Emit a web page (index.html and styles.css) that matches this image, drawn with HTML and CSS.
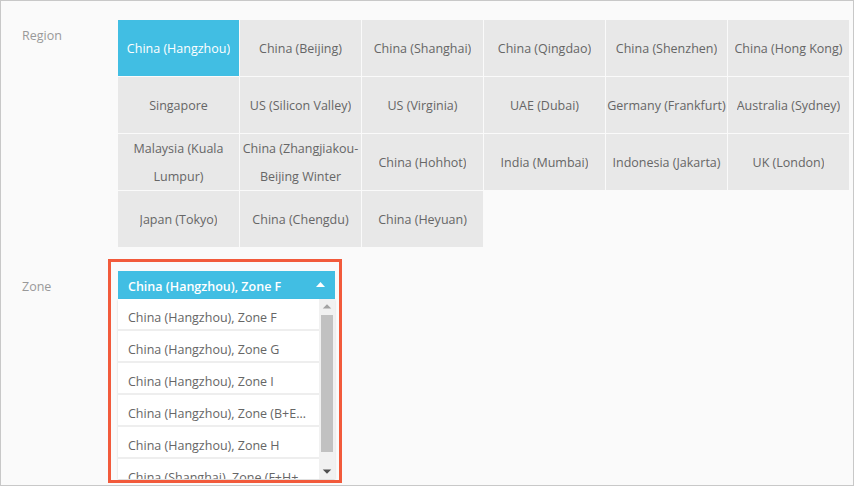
FILE: index.html
```html
<!DOCTYPE html>
<html lang="en">
<head>
    <meta charset="UTF-8">
    <meta name="viewport" content="width=device-width, initial-scale=1.0">
    <title>Region and Zone</title>
    <link rel="stylesheet" href="styles.css">
</head>
<body>
    <div class="frame">
        <div class="form-row">
            <div class="form-label">Region</div>
            <div class="region-grid">
                <div class="region-cell active"><span>China (Hangzhou)</span></div>
                <div class="region-cell"><span>China (Beijing)</span></div>
                <div class="region-cell"><span>China (Shanghai)</span></div>
                <div class="region-cell"><span>China (Qingdao)</span></div>
                <div class="region-cell"><span>China (Shenzhen)</span></div>
                <div class="region-cell"><span>China (Hong Kong)</span></div>
                <div class="region-cell"><span>Singapore</span></div>
                <div class="region-cell"><span>US (Silicon Valley)</span></div>
                <div class="region-cell"><span>US (Virginia)</span></div>
                <div class="region-cell"><span>UAE (Dubai)</span></div>
                <div class="region-cell"><span>Germany (Frankfurt)</span></div>
                <div class="region-cell"><span>Australia (Sydney)</span></div>
                <div class="region-cell"><span>Malaysia (Kuala Lumpur)</span></div>
                <div class="region-cell"><span>China (Zhangjiakou-Beijing Winter Games)</span></div>
                <div class="region-cell"><span>China (Hohhot)</span></div>
                <div class="region-cell"><span>India (Mumbai)</span></div>
                <div class="region-cell"><span>Indonesia (Jakarta)</span></div>
                <div class="region-cell"><span>UK (London)</span></div>
                <div class="region-cell"><span>Japan (Tokyo)</span></div>
                <div class="region-cell"><span>China (Chengdu)</span></div>
                <div class="region-cell"><span>China (Heyuan)</span></div>
            </div>
        </div>

        <div class="form-row zone-row">
            <div class="form-label">Zone</div>
            <div class="zone-select">
                <div class="select-head">
                    <span>China (Hangzhou), Zone F</span>
                    <svg class="caret" width="9" height="5" viewBox="0 0 9 5"><path d="M0 5 L4.5 0 L9 5 Z" fill="#fff"/></svg>
                </div>
                <div class="select-body">
                    <ul class="option-list">
                        <li>China (Hangzhou), Zone F</li>
                        <li>China (Hangzhou), Zone G</li>
                        <li>China (Hangzhou), Zone I</li>
                        <li>China (Hangzhou), Zone (B+E+F+G+H+I)</li>
                        <li>China (Hangzhou), Zone H</li>
                        <li>China (Shanghai), Zone (F+H+G+B+E)</li>
                    </ul>
                    <div class="scrollbar">
                        <svg class="scroll-btn" width="15" height="15" viewBox="0 0 15 15"><path d="M3.5 9 L7.5 5 L11.5 9 Z" fill="#a3a3a3"/></svg>
                        <div class="scroll-track"><div class="scroll-thumb"></div></div>
                        <svg class="scroll-btn" width="15" height="15" viewBox="0 0 15 15"><path d="M3.5 6 L7.5 10 L11.5 6 Z" fill="#505050"/></svg>
                    </div>
                </div>
                <div class="highlight"></div>
            </div>
        </div>
    </div>
</body>
</html>
```

FILE: styles.css
```css
html, body {
    margin: 0;
    padding: 0;
    background: #fff;
}
body {
    font-family: 'Open Sans', 'Noto Sans', sans-serif;
    font-size: 12.5px;
    color: #666;
}
.frame {
    width: 852px;
    height: 484px;
    border: 1px solid #c8c8c8;
    background: #fafafa;
    overflow: hidden;
}
.form-row {
    display: flex;
    padding-left: 21px;
    margin-top: 19px;
}
.zone-row {
    margin-top: 24px;
}
.form-label {
    width: 96px;
    flex-shrink: 0;
    padding-top: 2px;
    line-height: 28px;
    color: #999;
}
.region-grid {
    display: grid;
    grid-template-columns: repeat(6, 121px);
    grid-auto-rows: 56px;
    gap: 1px;
}
.region-cell {
    display: flex;
    align-items: center;
    justify-content: center;
    text-align: center;
    background: #e8e8e8;
    padding: 2px 1px 0;
    color: #666;
}
.region-cell span {
    display: block;
    line-height: 28px;
    max-height: 56px;
    overflow: hidden;
}
.region-cell.active {
    background: #41bee3;
    color: #fff;
}
.zone-select {
    position: relative;
    width: 217px;
}
.select-head {
    display: flex;
    align-items: center;
    justify-content: space-between;
    height: 26px;
    padding: 2px 10px 0 10px;
    background: #41bee3;
    color: #fff;
    font-weight: 600;
}
.caret {
    margin-bottom: 3px;
}
.select-body {
    display: flex;
    height: 180px;
    background: #fff;
    box-shadow: 0 1px 2px rgba(0, 0, 0, 0.15);
    overflow: hidden;
}
.option-list {
    flex: 1;
    margin: 0;
    padding: 0;
    list-style: none;
    min-width: 0;
}
.option-list li {
    height: 26px;
    padding: 4px 10px 0;
    line-height: 30px;
    border-bottom: 2px solid #eee;
    white-space: nowrap;
    overflow: hidden;
    text-overflow: ellipsis;
}
.scrollbar {
    width: 16px;
    display: flex;
    flex-direction: column;
    background: #f1f1f1;
    flex-shrink: 0;
}
.scroll-btn {
    display: block;
    flex-shrink: 0;
    width: 16px;
    height: 16px;
}
.scroll-track {
    flex: 1;
    padding: 0 2px;
}
.scroll-thumb {
    height: 137px;
    background: #c1c1c1;
}
.highlight {
    position: absolute;
    left: -10px;
    top: -12px;
    right: -7px;
    bottom: -4px;
    border: 3px solid #f25a3b;
    pointer-events: none;
}
```
